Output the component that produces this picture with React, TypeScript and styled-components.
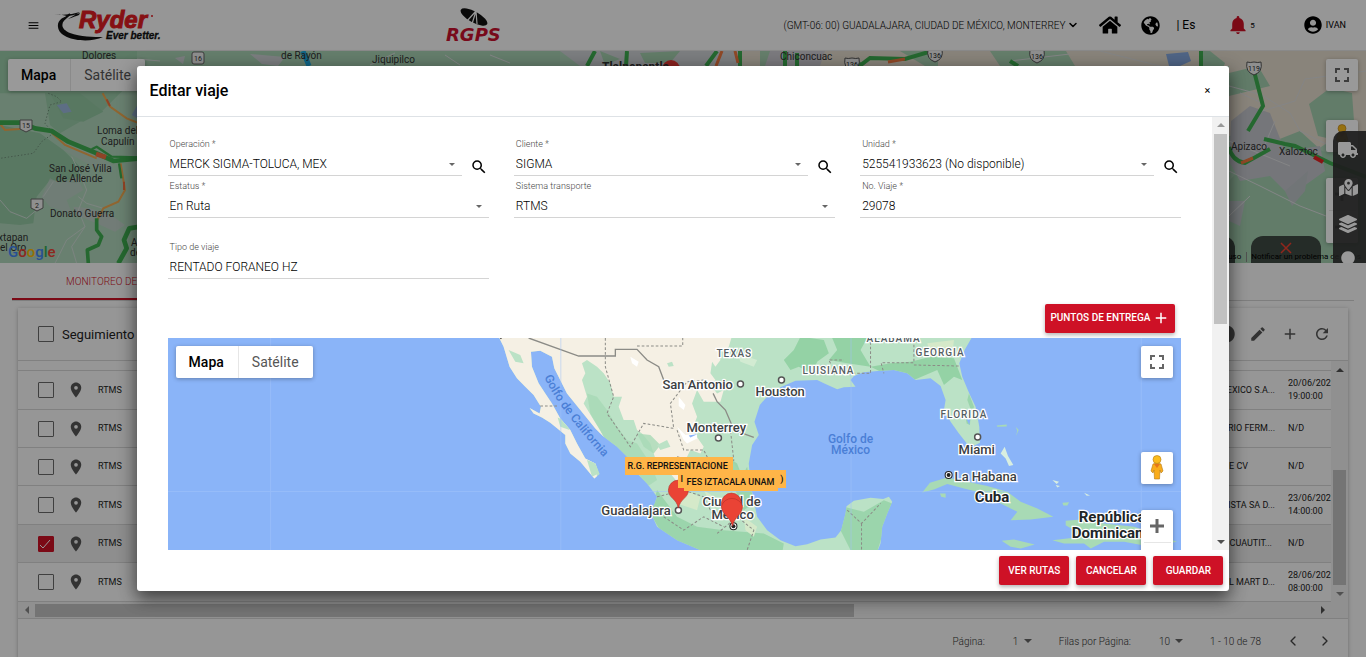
import React from "react";
import styled, { createGlobalStyle, css } from "styled-components";
import { FaCircle, FaGlobeAmericas, FaHome, FaLayerGroup, FaMapMarkedAlt, FaTruck, FaUserCircle } from "react-icons/fa";
import { IoMdNotifications } from "react-icons/io";
import { MdAdd, MdEdit, MdLocationOn, MdMenu, MdRefresh, MdSearch } from "react-icons/md";
import { FiChevronDown, FiChevronLeft, FiChevronRight } from "react-icons/fi";

const Global = createGlobalStyle`
  * { box-sizing: border-box; }
  body { margin: 0; font-family: Roboto, "Liberation Sans", sans-serif; background: #fafafa; }
  button, input, select { font-family: inherit; }
  button { cursor: pointer; }
`;

const red = "#ce1126";

const Page = styled.div`
  position: relative;
  height: 100vh;
  overflow: hidden;
  display: flex;
  flex-direction: column;
`;

/* ---------- top bar ---------- */

const TopBar = styled.header`
  flex: none;
  height: 51px;
  display: grid;
  grid-template-columns: 446px 1fr auto;
  align-items: center;
  border-bottom: 1px solid #e4e4e4;
`;

const Brand = styled.div`
  display: flex;
  align-items: center;
  gap: 14px;
  padding-left: 27px;
`;

const IconButton = styled.button<{ $color?: string }>`
  display: inline-flex;
  align-items: center;
  justify-content: center;
  flex: none;
  border: 0;
  padding: 0;
  background: none;
  color: ${(p) => p.$color ?? "#000"};
`;

const Tools = styled.div`
  display: flex;
  align-items: center;
  padding-right: 20px;
  font-size: 10px;
  color: #000;
`;

const Zone = styled(IconButton)`
  gap: 2px;
  font-size: 10px;
  font-weight: 300;
  margin-right: 20px;
`;

const LanguageButton = styled(IconButton)`
  margin-left: 20px;
`;

const Language = styled.span`
  font-size: 12px;
  margin: 0 32px 0 16px;
`;

const Count = styled.span`
  font-size: 8px;
  margin: 0 49px 0 1px;
`;

const User = styled(IconButton)`
  gap: 4px;
  font-size: 9px;
`;

/* ---------- maps ---------- */

const MapBox = styled.section<{ $height: number }>`
  position: relative;
  flex: none;
  height: ${(p) => p.$height}px;
  overflow: hidden;
  > svg { display: block; width: 100%; height: 100%; }
`;

const MapTypes = styled.div`
  position: absolute;
  top: 8px;
  left: 8px;
  display: flex;
  height: 32px;
  background: #fff;
  border-radius: 2px;
  box-shadow: 0 1px 4px rgba(0, 0, 0, 0.3);
`;

const MapType = styled.button<{ $active?: boolean }>`
  border: 0;
  padding: 0 14px 0 13px;
  background: none;
  font-size: 14px;
  line-height: 32px;
  font-weight: ${(p) => (p.$active ? 500 : 400)};
  color: ${(p) => (p.$active ? "#000" : "#565656")};
  & + & { border-left: 1px solid #e6e6e6; }
`;

const MapControls = styled.div<{ $gap: number }>`
  position: absolute;
  top: 8px;
  right: 8px;
  display: flex;
  flex-direction: column;
  gap: 26px;
  button:first-child { margin-bottom: ${(p) => p.$gap}px; }
`;

const control = css`
  width: 32px;
  background: #fff;
  border-radius: 2px;
  box-shadow: 0 1px 4px rgba(0, 0, 0, 0.3);
`;

const MapControl = styled(IconButton)`
  ${control}
  height: 32px;
`;

const ZoomControl = styled.div`
  ${control}
  display: flex;
  flex-direction: column;
  align-items: center;
  height: 65px;
  && button { height: 32px; width: 27px; margin: 0; }
  button + button { border-top: 1px solid #e6e6e6; }
`;

const SideDock = styled.nav`
  position: absolute;
  top: 80px;
  right: 0;
  bottom: 0;
  width: 33px;
  display: flex;
  flex-direction: column;
  align-items: center;
  gap: 18px;
  padding: 9px 3px 0 0;
  overflow: hidden;
  border-radius: 10px 0 0 0;
  background: rgba(50, 50, 50, 0.92);
`;

const BottomDock = styled.div`
  position: absolute;
  right: 45px;
  bottom: 0;
  display: flex;
  gap: 16px;
`;

const DockTab = styled.button`
  width: 70px;
  height: 27px;
  border: 0;
  padding: 0;
  border-radius: 12px 12px 0 0;
  background: #3f4a43;
`;

const MapTerms = styled.div`
  position: absolute;
  right: 5px;
  bottom: 1px;
  display: flex;
  gap: 5px;
  font-size: 8px;
  line-height: 10px;
  color: #000;
  span + span { border-left: 1px solid #888; padding-left: 4px; }
`;

const PlaceTag = styled.span<{ $x: number; $y: number; $w: number }>`
  position: absolute;
  left: ${(p) => p.$x}px;
  top: ${(p) => p.$y}px;
  width: ${(p) => p.$w}px;
  height: 18px;
  padding-left: 3px;
  background: #ffb548;
  font-size: 9px;
  line-height: 18px;
  font-weight: 500;
  color: #111;
  white-space: nowrap;
  display: flex;
  justify-content: space-between;
`;

/* ---------- tabs and table ---------- */

const Tabs = styled.div`
  flex: none;
  display: flex;
  height: 38px;
  margin: 0 12px;
  border-bottom: 1px solid #d2d2d2;
`;

const Tab = styled.button`
  border: 0;
  border-bottom: 2px solid ${red};
  padding: 2px 54px 0;
  background: none;
  color: ${red};
  font-size: 10px;
  font-weight: 300;
`;

const Card = styled.section`
  flex: 1 0 auto;
  margin: 7px 18px 0;
  display: flex;
  flex-direction: column;
  background: #fafafa;
  box-shadow: 0 1px 4px rgba(0, 0, 0, 0.28);
`;

const CardHead = styled.div`
  display: flex;
  align-items: center;
  height: 53px;
  padding: 0 17px 0 20px;
  border-bottom: 1px solid #d6d6d6;
`;

const CardTitle = styled.label`
  display: flex;
  align-items: center;
  gap: 8px;
  font-size: 13px;
  color: #222;
  margin-right: auto;
`;

const HeadIcons = styled.div`
  display: flex;
  gap: 14px;
`;

const Check = styled.input`
  appearance: none;
  display: block;
  width: 16px;
  height: 16px;
  margin: 0;
  border: 1px solid #6a6a6a;
  border-radius: 1px;
  &:checked {
    border-color: ${red};
    background: ${red} url("data:image/svg+xml,%3Csvg xmlns='http://www.w3.org/2000/svg' viewBox='0 0 14 14'%3E%3Cpath d='M1 8l3 3 7-8' fill='none' stroke='white'/%3E%3C/svg%3E");
  }
`;

const Scroller = styled.div`
  display: grid;
  grid-template-columns: 1fr 17px;
`;

const Table = styled.table`
  width: 100%;
  table-layout: fixed;
  border-collapse: separate;
  border-spacing: 0;
  font-size: 9px;
  line-height: 13px;
  color: #222;
`;

const Row = styled.tr<{ $checked?: boolean }>`
  background: ${(p) => (p.$checked ? "#ededed" : "transparent")};
`;

const Cell = styled.td<{ $end?: number }>`
  height: 38px;
  padding: 6px ${(p) => p.$end ?? 0}px 6px 0;
  border-bottom: 1px solid #d6d6d6;
  text-align: ${(p) => (p.$end ? "right" : "left")};
  white-space: nowrap;
  overflow: hidden;
  &:first-child { padding-left: 20px; }
  svg { display: block; }
`;

const Sliver = styled.td`
  height: 10px;
  padding: 0;
  border-bottom: 1px solid #d6d6d6;
`;

const Track = styled.div<{ $row?: boolean }>`
  display: flex;
  flex-direction: ${(p) => (p.$row ? "row" : "column")};
  align-items: center;
  justify-content: space-between;
  background: #f0f0f0;
`;

const TableThumb = styled.div`
  width: 13px;
  height: 115px;
  margin-top: auto;
  background: #c1c1c1;
`;

const LowerTrack = styled.div`
  flex: 1;
  height: 13px;
  > div { width: 64%; height: 13px; background: #c1c1c1; }
`;

const BottomTrack = styled(Track)`
  height: 17px;
  padding-right: 17px;
  border-bottom: 1px solid #d6d6d6;
`;

const Arrow = styled.span<{ $dir: "up" | "down" | "left" | "right"; $tone?: string }>`
  flex: none;
  display: flex;
  align-items: center;
  justify-content: center;
  width: 17px;
  height: 17px;
  &::before {
    content: "";
    border: 4px solid transparent;
    ${(p) => p.$dir === "up" && css`border-top: 0; border-bottom-color: ${p.$tone ?? "#505050"};`}
    ${(p) => p.$dir === "down" && css`border-bottom: 0; border-top-color: ${p.$tone ?? "#505050"};`}
    ${(p) => p.$dir === "left" && css`border-left: 0; border-right-color: ${p.$tone ?? "#505050"};`}
    ${(p) => p.$dir === "right" && css`border-right: 0; border-left-color: ${p.$tone ?? "#505050"};`}
  }
`;

const Pager = styled.div`
  display: flex;
  align-items: center;
  justify-content: flex-end;
  height: 44px;
  padding-right: 15px;
  font-size: 10px;
  font-weight: 300;
  color: #333;
`;

const PagerSelect = styled.select<{ $w: number }>`
  appearance: none;
  border: 0;
  padding: 0;
  background: none;
  font-size: 10px;
  font-weight: 300;
  color: #333;
  width: ${(p) => p.$w}px;
`;

const PagerField = styled.label`
  display: flex;
  align-items: center;
  margin-right: 22px;
  ${PagerSelect} { margin-left: 28px; }
`;

const PagerArrows = styled.div`
  display: flex;
  gap: 16px;
  margin-left: 24px;
`;

/* ---------- dialog ---------- */

const Backdrop = styled.div`
  position: absolute;
  inset: 0;
  display: flex;
  align-items: center;
  justify-content: center;
  background: rgba(0, 0, 0, 0.4);
`;

const Dialog = styled.div`
  display: flex;
  flex-direction: column;
  width: 80%;
  height: 80%;
  background: #fff;
  border-radius: 3px;
  box-shadow: 0 8px 16px rgba(0, 0, 0, 0.4), 0 4px 20px rgba(0, 0, 0, 0.3);
`;

const DialogHead = styled.div`
  flex: none;
  display: flex;
  align-items: center;
  justify-content: space-between;
  height: 51px;
  padding: 0 16px 0 13px;
  border-bottom: 1px solid #dee2e6;
`;

const DialogTitle = styled.h2`
  margin: 0;
  font-size: 16px;
  font-weight: 500;
  color: #000;
`;

const Close = styled(IconButton)`
  width: 12px;
  font-size: 11px;
`;

const DialogBody = styled.div`
  flex: 1;
  min-height: 0;
  display: grid;
  grid-template-columns: 1fr 17px;
`;

const Content = styled.div`
  min-height: 0;
  overflow: hidden;
  padding: 17px 31px 0;
`;

const Fields = styled.div`
  display: grid;
  grid-template-columns: repeat(3, 1fr);
  column-gap: 25px;
`;

const LastField = styled.div`
  padding-top: 19px;
`;

const FieldRow = styled.div`
  display: flex;
  align-items: flex-end;
`;

const Field = styled.div<{ $arrow?: boolean }>`
  position: relative;
  flex: 1;
  min-width: 0;
  height: 42px;
  border-bottom: 1px solid #d4d4d4;
  ${(p) => p.$arrow && css`
    &::after {
      content: "";
      position: absolute;
      right: 7px;
      bottom: 9px;
      border: 3px solid transparent;
      border-top-color: #666;
      border-bottom: 0;
      pointer-events: none;
    }
  `}
`;

const FieldLabel = styled.label`
  display: block;
  padding: 4px 0 0 2px;
  font-size: 9px;
  line-height: 12px;
  font-weight: 300;
  color: #444;
`;

const valueStyle = css`
  appearance: none;
  display: block;
  width: 100%;
  height: 25px;
  border: 0;
  outline: 0;
  padding: 3px 2px 0;
  background: none;
  font-size: 12px;
  line-height: 22px;
  font-weight: 300;
  color: #000;
`;
const TextValue = styled.input`${valueStyle}`;
const SelectValue = styled.select`${valueStyle}`;

const SearchButton = styled(IconButton)`
  width: 18px;
  height: 18px;
  margin: 0 1px 0 8px;
`;

const ActionRow = styled.div`
  display: flex;
  justify-content: flex-end;
  padding: 25px 6px 5px;
`;

const Action = styled.button`
  display: inline-flex;
  align-items: center;
  justify-content: center;
  gap: 2px;
  min-width: 70px;
  height: 29px;
  border: 0;
  border-radius: 2px;
  padding: 0 5px;
  background: ${red};
  color: #fff;
  font-size: 10px;
  line-height: 12px;
  font-weight: 500;
  box-shadow: 0 2px 4px rgba(0, 0, 0, 0.3);
`;

const ScrollTrack = styled(Track)`
  background: #f1f1f1;
  justify-content: flex-start;
  > div { width: 13px; height: 44%; background: #c1c1c1; }
  > span:last-child { margin-top: auto; }
`;

const DialogFoot = styled.div`
  flex: none;
  display: flex;
  justify-content: flex-end;
  gap: 7px;
  height: 41px;
  padding: 6px 6px 0;
`;

/* ---------- drawings ---------- */

const RyderLogo = () => (
  <svg width="120" height="34" viewBox="0 0 120 34" role="img" aria-label="Ryder Ever better.">
    <path d="M0 6Q14 8 26 4L14 11Q22 8 25 7L26 5Q18 8 13 8Q6 6 0 6Z" fill="#111" />
    <path d="M15 8C6 14 6 21 16 25C26 29 40 29 49 29C34 36 5 32 4 19C3 12 9 9 15 8Z" fill="#111" />
    <path d="M16 6L8 13" stroke="#111" strokeWidth="2" />
    <text x="25" y="20" fontFamily="Liberation Sans, sans-serif" fontSize="24" fontStyle="italic" fontWeight="700" fill="#e01b22" stroke="#e01b22">Ryder</text>
    <circle cx="98" cy="8" r="1" fill="#e01b22" />
    <text x="52" y="31" fontFamily="Liberation Sans, sans-serif" fontSize="10" fontStyle="italic" fontWeight="700" fill="#111" stroke="#111" strokeWidth=".3">Ever better.</text>
  </svg>
);

const RgpsLogo = () => (
  <svg width="64" height="36" viewBox="0 0 64 36" role="img" aria-label="RGPS">
    <ellipse cx="28" cy="10" rx="15" ry="5.500" transform="rotate(29 28 10)" fill="#111" />
    <path d="M21 14L30 4L26 17M30 4L31 17" fill="none" stroke="#fafafa" strokeWidth="1.200" />
    <text x="0" y="34" fontFamily="DejaVu Sans, sans-serif" fontSize="18" fontStyle="italic" fontWeight="700" fill="#c8102e">RGPS</text>
  </svg>
);

const FullscreenIcon = () => (
  <svg width="16" height="16" viewBox="0 0 16 16" fill="none" stroke="#666" strokeWidth="2">
    <path d="M2 6V2H6M10 2H14V6M14 10V14H10M6 14H2V10" />
  </svg>
);

const Pegman = () => (
  <svg width="16" height="25" viewBox="0 0 16 25">
    <path d="M4 9Q8 7 12 9L14 16L12 18L11 15L10.500 24H5.500L5 15L4 18L2 16Z" fill="#f9ac1b" stroke="#b67a14" strokeWidth=".6" />
    <path d="M5 9L8 13L11 9Z" fill="#e5761b" />
    <circle cx="8" cy="4.500" r="4" fill="#fbbc1c" stroke="#b67a14" strokeWidth=".6" />
  </svg>
);

const Sign = ({ minus }: { minus?: boolean }) => (
  <svg width="14" height="14" viewBox="0 0 14 14" stroke="#666" strokeWidth="3">
    <path d={minus ? "M0 7H14" : "M0 7H14M7 0V14"} />
  </svg>
);

const Shield = ({ x, y, n }: { x: number; y: number; n: string }) => (
  <g>
    <path d={`M${x - 7} ${y - 6}Q${x - 4} ${y - 5} ${x} ${y - 6}Q${x + 4} ${y - 5} ${x + 7} ${y - 6}Q${x + 9} ${y + 4} ${x} ${y + 7}Q${x - 9} ${y + 4} ${x - 7} ${y - 6}Z`} fill="#eee" stroke="#555" />
    <text x={x} y={y + 3} fontSize="7" textAnchor="middle" fill="#222">{n}</text>
  </g>
);

const RegionDrawing = () => (
  <svg viewBox="0 0 1366 212" preserveAspectRatio="none" fontFamily="Roboto, sans-serif" fontSize="10" fill="#333">
    <rect width="1366" height="212" fill="#b0d6bb" />
    <g transform="translate(0 -1) scale(.33333)">
      <path d="M0 0H420V70L300 190L240 215L180 250L150 225L135 130L0 130Z" fill="#9acba8" />
      <path d="M0 225L120 250L190 300L250 360L230 400L150 390L110 440L100 520L60 525L0 520Z" fill="#95c8a4" />
      <path d="M150 130L240 130L310 185L250 215L190 205Z" fill="#93c8a2" />
      <g fill="#c3cdcb">
        <path d="M125 440L150 385L180 400L230 380L250 420L200 450L215 490L180 480L150 470Z" opacity=".6" />
        <path d="M220 470L270 475L340 500L375 525L345 545L290 520L230 495Z" opacity=".8" />
        <path d="M190 300L260 300L340 345L330 370L260 340Z" opacity=".4" />
      </g>
      <path d="M170 165L200 160L215 185L190 190ZM395 195L412 165V205Z" fill="#9bb8dc" />
      <g fill="none" stroke="#cfdcd6" strokeWidth="3">
        <path d="M0 450L30 485L80 505L110 480M160 395L130 440M215 320L240 370L260 420L235 480L255 530L215 590L230 640M255 530L200 570L165 640M310 475L260 460L235 440" />
      </g>
      <path d="M145 130L170 140L185 155L150 165L135 220L160 250L125 275L100 310L0 325" fill="none" stroke="#6f8f78" strokeWidth="3" strokeDasharray="4 6" />
      <g fill="none" stroke="#f0a850" strokeWidth="6">
        <path d="M0 222L15 240L60 237M155 248L195 285L290 325M308 130L330 170L380 205L412 218M362 340L375 420L355 455L310 475L292 510" />
      </g>
      <g fill="none" stroke="#3fae50" strokeWidth="11" strokeLinejoin="round">
        <path d="M0 218H65L105 235L155 243L205 275L285 308L340 333L420 325" strokeWidth="14" />
        <path d="M275 298L290 290L335 320L420 322M357 340L364 385" strokeWidth="7" />
        <path d="M290 505V540L305 560L295 585L262 600L265 640" />
        <path d="M420 530L388 535L372 570L380 595L355 640" strokeWidth="14" />
      </g>
      <path d="M288 312L318 322" stroke="#ee7040" strokeWidth="14" />
      <path d="M320 148L330 168M372 395V420" stroke="#ee7040" strokeWidth="6" />
    </g>
    <path d="M137 0H560V15H137Z" fill="#a9d2b5" />
    <g fill="#cfd2d6">
      <path d="M250 3L285 6L278 15L262 13ZM175 7L185 5L183 13Z" />
      <path d="M560 0H750V15H580Z" />
    </g>
    <path d="M640 2L680 0L670 12H645ZM600 0L620 8L605 14Z" fill="#a3cfae" />
    <path d="M740 0H1366V110L1330 90L1300 110L1265 80L1229 85V15H740Z" fill="#e5dccd" />
    <path d="M760 0H770V15H760ZM900 0H938V15H925ZM990 0H1066L1075 15H1000Z" fill="#a8d2b3" />
    <path d="M770 0H825L820 15H765Z" fill="#cdcbd2" />
    <g fill="#a3cfb0">
      <path d="M1229 22L1258 15L1270 35L1229 45ZM1309 53L1330 37L1352 42L1354 70L1340 90L1318 85ZM1229 130L1262 95L1300 80L1322 100L1366 110V212H1229Z" />
      <path d="M1200 0H1210L1225 12L1218 30L1200 20Z" />
    </g>
    <path d="M1231 70L1250 55L1270 62L1285 100L1320 95L1325 120L1290 145L1270 125L1240 130L1229 110Z" fill="#c4c5cc" />
    <path d="M1285 140L1308 120L1305 140L1292 155ZM1229 150L1245 150L1240 175L1229 170Z" fill="#bcc4c6" />
    <path d="M1166 3L1188 1L1191 10L1180 15H1169Z" fill="#86a9e0" />
    <g fill="none" stroke="#dcdedf" strokeWidth="1">
      <path d="M1200 28L1229 35L1262 44L1290 62L1300 80L1330 95M1262 52L1240 42M1366 20L1305 28L1295 50L1262 60M1229 90L1290 115M1229 120L1260 135L1300 155L1326 165M1250 145L1229 165M1275 70L1260 105" />
      <path d="M137 8L160 10M370 14L395 2M445 4L460 14M490 4L510 12M1100 0L1160 15M1010 10L1070 3" />
    </g>
    <g fill="none" stroke="#3fae50" strokeWidth="4">
      <path d="M587 15L595 0M627 0L626 15M706 15L717 0M740 0V15M785 0V15M797 2V15M848 15L862 13L870 7L905 8L932 0M1010 10L1018 15M1201 0V15M1254 20L1263 55L1248 80M1229 96Q1232 110 1245 112L1270 98M1264 88L1285 93L1295 95L1330 112L1366 126" />
    </g>
    <path d="M716 15L722 0M735 0L738 12M888 11L905 8M1241 112L1253 107" fill="none" stroke="#ee7840" strokeWidth="3" />
    <path d="M1314 106L1323 111" stroke="#e22222" strokeWidth="4" />
    <path d="M303 0L309 15" stroke="#1da8e0" strokeWidth="5" />
    <circle cx="671" cy="18" r="9" fill="#ea3a35" />
    <g fill="#eee" stroke="#666">
      <rect x="192" y="1" width="12" height="12" rx="2" />
      <path d="M20 69H32V78L26 81L20 78ZM31 148H43V157L37 160L31 157Z" />
    </g>
    <g fontSize="7" textAnchor="middle"><text x="198" y="10">16</text><text x="26" y="77">15</text><text x="37" y="157">2</text></g>
    <Shield x={852} y={13} n="136" />
    <Shield x={935} y={4} n="136" />
    <Shield x={1037} y={5} n="136" />
    <Shield x={1254} y={17} n="119" />
    <text x="82" y="8">Dolores</text>
    <text x="281" y="8">de Rayón</text>
    <text x="372" y="12">Jiquipilco</text>
    <text x="780" y="9">Chiconcuac</text>
    <text x="602" y="20" fontSize="12" fontWeight="700">Tlalnepantla</text>
    <text x="97" y="83">Loma del</text><text x="101" y="94">Capulín</text>
    <text x="49" y="121">San José Villa</text><text x="56" y="131">de Allende</text>
    <text x="50" y="166">Donato Guerra</text>
    <text x="-2" y="190">xtapan</text><text x="0" y="200">el Oro</text>
    <text x="131" y="195">Amanalco</text><text x="130" y="205">de Becerra</text>
    <text x="1231" y="99">Apizaco</text><text x="1279" y="104">Xaloztoc</text>
    <text x="8" y="206" fontSize="15" fontWeight="500">
      <tspan fill="#4285f4">G</tspan><tspan fill="#ea4335">o</tspan><tspan fill="#fbbc05">o</tspan><tspan fill="#4285f4">g</tspan><tspan fill="#34a853">l</tspan><tspan fill="#ea4335">e</tspan>
    </text>
  </svg>
);

const Ring = ({ x, y }: { x: number; y: number }) => <circle cx={x} cy={y} r="3" fill="#fff" stroke="#555" strokeWidth="1.500" />;
const Capital = ({ x, y }: { x: number; y: number }) => (
  <g><circle cx={x} cy={y} r="3.500" fill="#fff" stroke="#222" /><circle cx={x} cy={y} r="2" fill="#222" /></g>
);

const GulfDrawing = () => (
  <svg viewBox="0 0 1013 400" preserveAspectRatio="xMidYMin slice" fontFamily="Roboto, sans-serif">
    <defs>
      <clipPath id="land">
        <path id="coast" d="M85 20L100 50L118 110L140 145L165 170L190 195L212 230L208 250L178 234L190 250L215 262L240 278L285 315L285 340L300 370L330 395L355 425L372 445L388 432L375 400L345 385L320 340L300 300L270 265L245 220L225 190L205 160L185 110L182 65L210 62L245 80L252 115L290 190L330 240L375 295L400 320L440 350L470 380L490 420L530 460L560 500L553 520L540 545L560 590L620 630L690 660L820 760L1000 900L1400 1100L1300 760L1222 660L1230 640L1235 590L1250 550L1265 515L1255 500L1238 507L1200 503L1150 512L1128 528L1125 550L1112 600L1095 622L1050 628L1010 642L975 648L930 630L890 600L860 560L850 510L840 460L835 400L845 345L865 315L852 275L868 225L885 205L930 172L975 152L1040 150L1060 160L1100 178L1120 172L1155 170L1140 150L1150 138L1180 127L1230 122L1270 120L1310 130L1335 150L1380 145L1410 168L1425 210L1420 240L1440 275L1465 310L1490 342L1510 347L1528 338L1526 290L1515 230L1496 190L1475 140L1466 100L1482 60L1505 20Z" />
      </clipPath>
    </defs>
    <rect width="1013" height="400" fill="#8ab4f8" />
    <g transform="translate(302 -8) scale(.33333)">
      <use href="#coast" fill="#bbe2c6" />
      <g clipPath="url(#land)">
        <path d="M80 0H790L775 50L760 65L745 60L750 90L735 110L725 95L720 130L735 150L720 165L740 190L760 180L750 215L700 215L680 180L665 220L680 260L665 300L700 350L690 370L660 360L640 400L655 440L640 480L600 430L560 400L540 340L515 310L500 300L490 270L460 270L445 230L455 200L430 200L420 160L400 130L380 110L350 90L335 100L345 130L335 150L350 200L340 220L370 270L390 300L400 320L375 330L380 450L340 440L100 220Z" fill="#f5f0e4" />
        <path d="M115 60L150 75L160 100L135 95ZM262 262L290 275L298 300L270 290ZM350 390L380 400L385 430L365 440Z" fill="#bbe2c6" />
        <path d="M350 190L380 200L410 240L440 290L470 330L500 340L540 400L560 450L530 470L470 380L400 320L360 250ZM500 310L540 315L570 345L550 370L520 350Z" fill="#a8dab5" opacity=".8" />
        <path d="M560 345L590 330L600 350L570 360ZM545 395L590 385L610 410L580 420ZM590 100L605 95L610 108L595 110Z" fill="#bbe2c6" />
        <path d="M480 80L505 95L500 110L485 100ZM625 200L645 225L640 240L625 228ZM620 290L645 315L680 310L680 325L650 340L640 330Z" fill="#fff" />
        <path d="M655 316L682 312L660 322Z" fill="#8ab4f8" />
        <path d="M800 70L860 90L850 110L810 95ZM790 400L820 440L800 460L770 420Z" fill="#d2ebd2" />
        <path d="M940 90L970 60L990 20L1060 30L1075 70L1040 95L1025 130L985 110L960 120ZM1085 24L1190 24L1170 60L1200 110L1260 100L1320 95L1380 80L1450 85L1475 150L1450 140L1420 165L1400 120L1330 150L1240 130L1200 110L1130 100L1075 90L1100 60Z" fill="#94d2a5" />
        <path d="M1120 530L1180 545L1240 510L1265 520L1240 600L1215 680H1150L1110 600ZM1485 260L1500 255L1498 285L1488 280ZM1495 190L1510 230L1505 250L1490 210ZM560 480L620 560L680 590L760 600L880 610L940 640L930 700H700L580 620L540 550ZM770 380L800 400L815 440L830 410L850 520L820 540L790 470Z" fill="#94d2a5" opacity=".8" />
        <path d="M1488 268L1500 262L1496 285Z" fill="#8ab4f8" />
        <path d="M600 470L640 480L690 500L680 540L620 520ZM820 560L860 590L850 620L825 600ZM1370 40L1450 30L1445 75L1380 80ZM700 480L730 500L720 520Z" fill="#d5e9c9" />
      </g>
      <g fill="#a8dab5">
        <path d="M1355 487L1378 458L1430 442L1490 455L1550 468L1610 485L1650 515L1700 535L1748 560L1680 568L1620 570L1640 545L1590 520L1560 495L1480 475L1430 462L1390 478Z" />
        <path d="M1408 490L1425 490L1425 503L1412 500Z" />
        <path d="M1785 572L1830 568L1900 580L1990 590L2060 612L2118 635L2040 650L1960 635L1900 635L1860 655L1840 640L1780 640L1745 630L1815 622L1810 600L1785 585ZM1593 632L1630 628L1692 643L1650 655L1620 650ZM1775 518L1795 516L1790 526L1778 526Z" />
        <path d="M1578 286L1608 283L1608 289L1580 290ZM1635 290L1644 300L1636 318L1640 302Z" />
        <path d="M1590 370L1602 350L1612 378L1628 405L1615 408L1605 385ZM1745 450L1765 455L1758 462ZM1755 465L1768 468L1760 472ZM1840 488L1858 496L1848 497Z" fill="#d8eee0" />
      </g>
      <g fill="none" stroke="#8b8b86" strokeWidth="4">
        <path d="M175 24L325 78H435V58H500L530 90L565 110L580 150M728 190L740 215L765 240L780 275L790 300L850 322" />
        <g strokeDasharray="8 6" strokeWidth="3">
          <path d="M500 48H637V24M405 24V110L430 200L410 250L480 350L520 280L610 295L600 220L650 155L700 150M210 228H265M620 300L640 360L700 360L730 420L790 390L780 300M560 500L640 480L700 500L730 560L820 560M580 560L640 600L700 560L760 590M740 610L800 560L850 600L830 660M620 380L690 400L710 450M1090 130L1200 130V24M1232 100L1240 130M1236 98H1330V24M1330 105L1470 108M1080 100L1075 90H1120M1130 540L1173 580L1230 520M1173 580V660" />
        </g>
      </g>
      <path d="M85 20L98 20L92 28Z" fill="#333" />
    </g>
    <path d="M102.500 0V400M392.500 0V400M682.500 0V400M972.500 0V400M0 153.500H1013" stroke="#a3c4fa" opacity=".5" />
    <g fill="#555e63" stroke="#fff" strokeWidth="2.500" paintOrder="stroke" fontSize="10" fontWeight="500" letterSpacing="1">
      <text x="548" y="19">TEXAS</text>
      <text x="634" y="36">LUISIANA</text>
      <text x="698" y="4">ALABAMA</text>
      <text x="747" y="18">GEORGIA</text>
      <text x="772" y="80">FLORIDA</text>
    </g>
    <g fill="#3b4043" stroke="#fff" strokeWidth="2.500" paintOrder="stroke" fontSize="13" fontWeight="500">
      <text x="494" y="51">San Antonio</text>
      <text x="587" y="58">Houston</text>
      <text x="518" y="94">Monterrey</text>
      <text x="433" y="177">Guadalajara</text>
      <text x="534" y="168">Ciudad de</text>
      <text x="543" y="181">México</text>
      <text x="790" y="116">Miami</text>
      <text x="786" y="143">La Habana</text>
    </g>
    <g fill="#202427" stroke="#fff" strokeWidth="2.500" paintOrder="stroke" fontSize="15" fontWeight="700">
      <text x="806" y="164">Cuba</text>
      <text x="910" y="184">República</text>
      <text x="903" y="200">Dominicana</text>
    </g>
    <g fill="#4a7fd6" fontSize="12" fontWeight="500">
      <text x="682" y="105" textAnchor="middle">Golfo de</text>
      <text x="682" y="116" textAnchor="middle">México</text>
      <path id="bay" d="M376 39Q390 72 450 135" fill="none" />
      <text><textPath href="#bay">Golfo de California</textPath></text>
    </g>
    <Ring x={572} y={46} /><Ring x={613} y={42} /><Ring x={550} y={100} /><Ring x={510} y={172} /><Ring x={809} y={99} />
    <Capital x={780} y={137} /><Capital x={565} y={188} />
    <g fill="#ea4335" stroke="#b3302a" strokeWidth=".6">
      <path d="M510 170C508 160 500 160 500 152A10 10 0 0 1 520 152C520 160 512 160 510 170Z" />
      <path d="M563 184C561 174 553 174 553 165A10 10 0 0 1 573 165C573 174 565 174 563 184Z" />
      <path d="M564 188C562 178 553 177 553 168A11 11 0 0 1 574 168C574 177 566 178 564 188Z" />
    </g>
  </svg>
);

/* ---------- composed parts ---------- */

const MapChrome = ({ gap }: { gap: number }) => (
  <>
    <MapTypes>
      <MapType $active>Mapa</MapType>
      <MapType>Satélite</MapType>
    </MapTypes>
    <MapControls $gap={gap}>
      <MapControl aria-label="Pantalla completa"><FullscreenIcon /></MapControl>
      <MapControl aria-label="Street View"><Pegman /></MapControl>
      <ZoomControl>
        <IconButton aria-label="Acercar"><Sign /></IconButton>
        <IconButton aria-label="Alejar"><Sign minus /></IconButton>
      </ZoomControl>
    </MapControls>
  </>
);

type FieldProps = { id: string; label: string; value: string; kind?: "search" | "select" | "text" };

const FormField = ({ id, label, value, kind = "text" }: FieldProps) => (
  <FieldRow>
    <Field $arrow={kind !== "text"}>
      <FieldLabel htmlFor={id}>{label}</FieldLabel>
      {kind === "select" ? (
        <SelectValue id={id}><option>{value}</option></SelectValue>
      ) : (
        <TextValue id={id} defaultValue={value} />
      )}
    </Field>
    {kind === "search" && <SearchButton aria-label={`Buscar ${label}`}><MdSearch size={18} /></SearchButton>}
  </FieldRow>
);

const rows = [
  { client: "DE MEXICO S.A...", date: ["20/06/2022", "19:00:00"] },
  { client: "ROSARIO FERM...", date: ["N/D"] },
  { client: "ALIMENTOS SA DE CV", date: ["N/D"], end: 40 },
  { client: "BAUTISTA SA D...", date: ["23/06/2022", "14:00:00"] },
  { client: "SORIANA CUAUTIT...", date: ["N/D"], checked: true, end: 16 },
  { client: "WAL MART D...", date: ["28/06/2022", "08:00:00"], start: ["24/06/2022", "15:47:18"] },
];

const Lines = ({ items }: { items: string[] }) => (
  <>{items.map((t) => <div key={t}>{t}</div>)}</>
);

export default function App() {
  return (
    <Page>
      <Global />
      <TopBar>
        <Brand>
          <IconButton aria-label="Menú"><MdMenu size={13} /></IconButton>
          <RyderLogo />
        </Brand>
        <RgpsLogo />
        <Tools>
          <Zone>(GMT-06: 00) GUADALAJARA, CIUDAD DE MÉXICO, MONTERREY<FiChevronDown size={12} strokeWidth={3} /></Zone>
          <IconButton aria-label="Inicio"><FaHome size={22} /></IconButton>
          <LanguageButton aria-label="Idioma"><FaGlobeAmericas size={19} /></LanguageButton>
          <Language>| Es</Language>
          <IconButton $color={red} aria-label="Notificaciones"><IoMdNotifications size={22} /></IconButton>
          <Count>5</Count>
          <User><FaUserCircle size={18} />IVAN</User>
        </Tools>
      </TopBar>

      <MapBox $height={212}>
        <RegionDrawing />
        <MapChrome gap={3} />
        <BottomDock>
          <DockTab aria-label="Panel" />
          <DockTab aria-label="Cerrar">
            <svg width="12" height="12" viewBox="0 0 12 12" stroke="#f04030" strokeWidth="1.500"><path d="M1 1L11 11M11 1L1 11" /></svg>
          </DockTab>
        </BottomDock>
        <MapTerms><span>Condiciones de uso</span><span>Notificar un problema de Maps</span></MapTerms>
        <SideDock>
          <IconButton $color="#fff" aria-label="Unidades"><FaTruck size={20} /></IconButton>
          <IconButton $color="#fff" aria-label="Ubicaciones"><FaMapMarkedAlt size={19} /></IconButton>
          <IconButton $color="#fff" aria-label="Capas"><FaLayerGroup size={18} /></IconButton>
          <IconButton $color="#fff" aria-label="Alertas"><FaCircle size={14} /></IconButton>
        </SideDock>
      </MapBox>

      <Tabs><Tab>MONITOREO DE UNIDADES</Tab></Tabs>

      <Card>
        <CardHead>
          <CardTitle><Check type="checkbox" />Seguimiento de viajes</CardTitle>
          <HeadIcons>
            <IconButton $color="#555" aria-label="Información"><FaCircle size={18} /></IconButton>
            <IconButton $color="#555" aria-label="Editar"><MdEdit size={18} /></IconButton>
            <IconButton $color="#555" aria-label="Agregar"><MdAdd size={18} /></IconButton>
            <IconButton $color="#555" aria-label="Actualizar"><MdRefresh size={18} /></IconButton>
          </HeadIcons>
        </CardHead>
        <Scroller>
          <Table>
            <colgroup>
              <col width="49" /><col width="31" /><col /><col width="300" /><col width="146" /><col width="43" />
            </colgroup>
            <tbody>
              <tr><Sliver colSpan={6} /></tr>
              {rows.map((r, i) => (
                <Row key={i} $checked={r.checked}>
                  <Cell><Check type="checkbox" defaultChecked={r.checked} aria-label={`Viaje ${i + 1}`} /></Cell>
                  <Cell><MdLocationOn size={18} color="#555" /></Cell>
                  <Cell>RTMS</Cell>
                  <Cell>{r.start && <Lines items={r.start} />}</Cell>
                  <Cell $end={r.end ?? 13}>{r.client}</Cell>
                  <Cell><Lines items={r.date} /></Cell>
                </Row>
              ))}
            </tbody>
          </Table>
          <Track>
            <Arrow $dir="up" />
            <TableThumb />
            <Arrow $dir="down" $tone="#888" />
          </Track>
        </Scroller>
        <BottomTrack $row>
          <Arrow $dir="left" $tone="#888" />
          <LowerTrack><div /></LowerTrack>
          <Arrow $dir="right" />
        </BottomTrack>
        <Pager>
          <PagerField>Página:<PagerSelect $w={7}><option>1</option></PagerSelect><Arrow $dir="down" $tone="#666" /></PagerField>
          <PagerField>Filas por Página:<PagerSelect $w={12}><option>10</option></PagerSelect><Arrow $dir="down" $tone="#666" /></PagerField>
          <span>1 - 10 de 78</span>
          <PagerArrows>
            <IconButton $color="#444" aria-label="Anterior"><FiChevronLeft size={16} /></IconButton>
            <IconButton $color="#444" aria-label="Siguiente"><FiChevronRight size={16} /></IconButton>
          </PagerArrows>
        </Pager>
      </Card>

      <Backdrop>
        <Dialog role="dialog" aria-modal="true" aria-labelledby="dialog-title">
          <DialogHead>
            <DialogTitle id="dialog-title">Editar viaje</DialogTitle>
            <Close aria-label="Cerrar">×</Close>
          </DialogHead>
          <DialogBody>
            <Content>
              <Fields>
                <FormField id="operacion" label="Operación *" value="MERCK SIGMA-TOLUCA, MEX" kind="search" />
                <FormField id="cliente" label="Cliente *" value="SIGMA" kind="search" />
                <FormField id="unidad" label="Unidad *" value="525541933623 (No disponible)" kind="search" />
                <FormField id="estatus" label="Estatus *" value="En Ruta" kind="select" />
                <FormField id="sistema" label="Sistema transporte" value="RTMS" kind="select" />
                <FormField id="viaje" label="No. Viaje *" value="29078" />
                <LastField><FormField id="tipo" label="Tipo de viaje" value="RENTADO FORANEO HZ" /></LastField>
              </Fields>
              <ActionRow><Action>PUNTOS DE ENTREGA <MdAdd size={18} /></Action></ActionRow>
              <MapBox $height={400}>
                <GulfDrawing />
                <PlaceTag $x={457} $y={119} $w={108}>R.G. REPRESENTACIONE</PlaceTag>
                <PlaceTag $x={510} $y={132} $w={108}><span>I</span><span>)&nbsp;</span></PlaceTag>
                <PlaceTag $x={516} $y={135} $w={94}>FES IZTACALA UNAM</PlaceTag>
                <MapChrome gap={48} />
              </MapBox>
            </Content>
            <ScrollTrack>
              <Arrow $dir="up" $tone="#999" />
              <div />
              <Arrow $dir="down" />
            </ScrollTrack>
          </DialogBody>
          <DialogFoot>
            <Action>VER RUTAS</Action>
            <Action>CANCELAR</Action>
            <Action>GUARDAR</Action>
          </DialogFoot>
        </Dialog>
      </Backdrop>
    </Page>
  );
}
